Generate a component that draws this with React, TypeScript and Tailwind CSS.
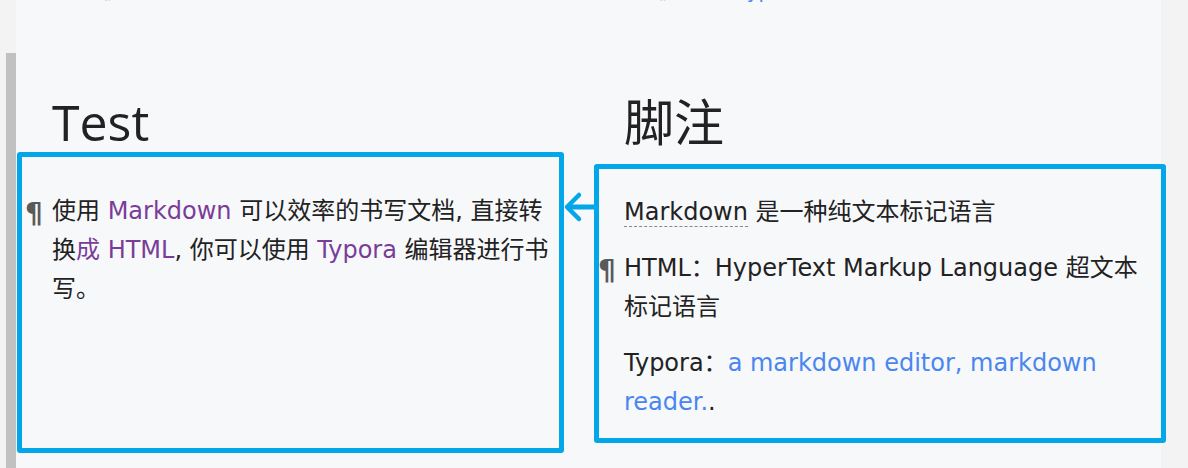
import React from "react";

const body = { fontFamily: '"DejaVu Sans", "Noto Sans CJK SC", sans-serif' };
const head = { fontFamily: '"Open Sans", "Noto Sans CJK SC", sans-serif' };

function Pilcrow({ className }: { className: string }) {
  return (
    <span
      className={"absolute text-[28px] font-bold leading-[39px] text-[#5a5a5a] " + className}
      style={body}
    >
      ¶
    </span>
  );
}

export default function App() {
  return (
    <div className="flex w-[1188px] h-[468px] overflow-hidden bg-[#f3f3f3]">
      {/* left gutter */}
      <div className="w-4 shrink-0 flex flex-col">
        <div className="h-[53px] shrink-0" />
        <div className="ml-[6px] w-[10px] flex-1 bg-[#c1c1c1]" />
      </div>

      {/* editor content */}
      <div className="w-[1145px] shrink-0 bg-[#f7f8fa] flex flex-col relative">
        {/* cut-off previous line */}
        <div className="h-[92px] shrink-0 relative overflow-hidden" style={body}>
          <div className="flex text-[20px] leading-[24px] text-[#333] -mt-[21px]">
            <span className="ml-[57px] text-[#bbb]">·</span>
            <span className="ml-[20px] text-[#555]">¶</span>
            <span className="ml-[4px]">列表</span>
            <span className="ml-[472px] text-[#bbb]">·</span>
            <span className="ml-[20px] text-[#555]">¶</span>
            <span className="ml-[4px]">列表项 <span className="text-[#4a86f0]">Typ</span></span>
          </div>
        </div>

        {/* two columns */}
        <div className="flex gap-[30px] pl-[1px] relative">
          {/* left column */}
          <div className="w-[547px] shrink-0 flex flex-col">
            <h2
              className="pl-[35px] h-[60px] text-[50px] leading-[60px] font-normal text-[#222]"
              style={head}
            >
              Test
            </h2>
            <div
              className="relative h-[301px] border-[5px] border-[#03a6e8] rounded-[3px] pl-[30px] pt-[35px] text-[24px] leading-[39px] text-[#222]"
              style={body}
            >
              <Pilcrow className="left-[3px] top-[37px]" />
              <p className="whitespace-nowrap">
                使用 <span className="text-[#7a3c99]">Markdown</span> 可以效率的书写文档, 直接转
                <br />
                换<span className="text-[#7a3c99]">成 HTML</span>, 你可以使用{" "}
                <span className="text-[#7a3c99]">Typora</span> 编辑器进行书
                <br />
                写。
              </p>
            </div>
          </div>

          {/* right column */}
          <div className="w-[572px] shrink-0 flex flex-col">
            <h2
              className="pl-[30px] h-[60px] text-[50px] leading-[60px] font-normal text-[#222]"
              style={head}
            >
              脚注
            </h2>
            <div
              className="relative mt-[12px] border-[5px] border-[#03a6e8] rounded-[3px] pl-[25px] pt-[24px] pb-[16px] flex flex-col gap-[17px] text-[24px] leading-[39px] text-[#222]"
              style={body}
            >
              <p className="whitespace-nowrap">
                <span className="border-b border-dashed border-[#888]">Markdown</span> 是一种纯文本标记语言
              </p>
              <p className="relative whitespace-nowrap">
                <Pilcrow className="-left-[26px] top-[2px]" />
                HTML：HyperText Markup Language 超文本
                <br />
                标记语言
              </p>
              <p className="whitespace-nowrap">
                Typora：<span className="text-[#4a86f0]">a markdown editor, markdown</span>
                <br />
                <span className="text-[#4a86f0]">reader.</span>.
              </p>
            </div>
          </div>

          {/* connector arrow */}
          <svg
            className="absolute left-[546px] top-[98px]"
            width="34"
            height="34"
            viewBox="0 0 34 34"
          >
            <line x1="5" y1="17" x2="34" y2="17" stroke="#03a6e8" strokeWidth="5" />
            <polyline
              points="17,5 5,17 17,29"
              fill="none"
              stroke="#03a6e8"
              strokeWidth="4.5"
              strokeLinecap="round"
              strokeLinejoin="round"
            />
          </svg>
        </div>
      </div>

      <div className="flex-1" />
    </div>
  );
}
